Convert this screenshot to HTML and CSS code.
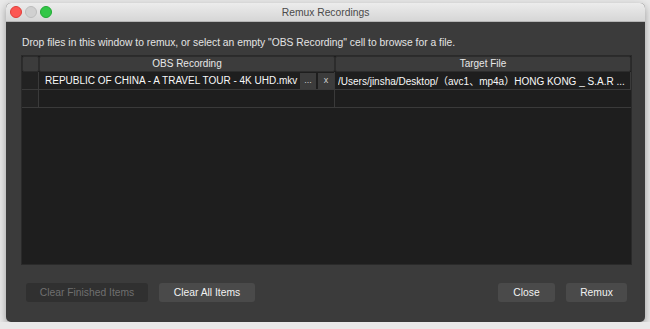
FILE: index.html
```html
<!DOCTYPE html>
<html lang="en">
<head>
    <meta charset="UTF-8">
    <title>Remux Recordings</title>
    <link rel="stylesheet" href="styles.css">
</head>
<body>
    <div class="window">
        <div class="titlebar">
            <div class="lights">
                <span class="light close-light"></span>
                <span class="light min-light"></span>
                <span class="light max-light"></span>
            </div>
            <div class="title">Remux Recordings</div>
            <div></div>
        </div>
        <div class="content">
            <p class="hint">Drop files in this window to remux, or select an empty "OBS Recording" cell to browse for a file.</p>
            <div class="table">
                <div class="grid">
                    <div class="head corner"></div>
                    <div class="head">OBS Recording</div>
                    <div class="head">Target File</div>

                    <div class="cell rowhead"></div>
                    <div class="cell source">
                        <span class="cell-text">REPUBLIC OF CHINA - A TRAVEL TOUR - 4K UHD.mkv</span>
                        <span class="mini-button">...</span>
                        <span class="mini-button">x</span>
                    </div>
                    <div class="cell target"><span class="cell-text">/Users/jinsha/Desktop/（avc1、mp4a）HONG KONG _ S.A.R ...</span></div>

                    <div class="cell rowhead"></div>
                    <div class="cell"></div>
                    <div class="cell"></div>
                </div>
            </div>
            <div class="footer">
                <div class="button-group">
                    <button class="button" disabled>Clear Finished Items</button>
                    <button class="button clear-all-button">Clear All Items</button>
                </div>
                <div class="button-group">
                    <button class="button close-button">Close</button>
                    <button class="button remux-button">Remux</button>
                </div>
            </div>
        </div>
    </div>
</body>
</html>
```

FILE: styles.css
```css
body {
    margin: 0;
    background-color: #e9e9e9;
    font-family: 'Liberation Sans', Arial, 'Noto Sans CJK SC', sans-serif;
    overflow: hidden;
}

.window {
    margin: 3px 0 0 6px;
    width: 639px;
    height: 319px;
    display: flex;
    flex-direction: column;
    background-color: #3b3b3b;
    border-radius: 5px;
    overflow: hidden;
    box-shadow: 0 3px 9px rgba(0, 0, 0, 0.35);
}

.titlebar {
    height: 18px;
    display: grid;
    grid-template-columns: 1fr auto 1fr;
    align-items: center;
    background: linear-gradient(#ececec, #d6d6d6);
    border-bottom: 1px solid #b5b5b5;
}

.lights {
    display: flex;
    gap: 3px;
    padding-left: 4px;
}

.light {
    width: 12px;
    height: 12px;
    border-radius: 50%;
    box-sizing: border-box;
}

.close-light {
    background-color: #fc5753;
    border: 1px solid #df3d39;
}

.min-light {
    background-color: #d0d0d0;
    border: 1px solid #bcbcbc;
}

.max-light {
    background-color: #33c748;
    border: 1px solid #21a934;
}

.title {
    font-size: 10.3px;
    color: #4a4a4a;
}

.content {
    flex: 1;
    display: flex;
    flex-direction: column;
    padding: 14px 13px 0 15px;
}

.hint {
    margin: 0;
    padding-left: 1px;
    font-size: 10.3px;
    line-height: 14px;
    color: #e4e4e4;
}

.table {
    margin-top: 5px;
    height: 210px;
    box-sizing: border-box;
    background-color: #1e1e1e;
    border: 1px solid #2a2a2a;
}

.grid {
    display: grid;
    grid-template-columns: 17px 296px 1fr;
    grid-template-rows: 16px 18px 18px;
}

.head {
    background-color: #3c3c3c;
    border: 1px solid #2c2c2c;
    border-radius: 2px;
    font-size: 10px;
    line-height: 14px;
    color: #e8e8e8;
    text-align: center;
}

.cell {
    min-width: 0;
    border-right: 1px solid #3a3a3a;
    border-bottom: 1px solid #3a3a3a;
    font-size: 10px;
    color: #f8f8f8;
    display: flex;
    align-items: center;
    gap: 2px;
    white-space: nowrap;
    overflow: hidden;
}

.cell:last-child {
    border-right: none;
}

.rowhead {
    background-color: #222222;
}

.cell-text {
    flex: 1;
    min-width: 0;
    overflow: hidden;
    text-overflow: ellipsis;
}

.source {
    padding-left: 6px;
}

.target {
    padding-left: 3px;
    padding-right: 4px;
}

.mini-button {
    flex-shrink: 0;
    width: 16px;
    height: 16px;
    line-height: 15px;
    text-align: center;
    background-color: #3c3c3c;
    color: #d0d0d0;
    font-size: 9px;
}

.footer {
    display: flex;
    justify-content: space-between;
    padding: 18px 5px 0 5px;
}

.button-group {
    display: flex;
    gap: 11px;
}

.button {
    height: 19px;
    padding: 0 12px;
    font-family: 'Liberation Sans', Arial, sans-serif;
    font-size: 10.3px;
    color: #f2f2f2;
    background-color: #4a4a4a;
    border: none;
    border-radius: 3px;
}

.button:disabled {
    width: 122px;
    background-color: #303030;
    color: #6f6f6f;
}

.clear-all-button {
    width: 96px;
}

.close-button {
    width: 57px;
}

.remux-button {
    width: 61px;
}
```
